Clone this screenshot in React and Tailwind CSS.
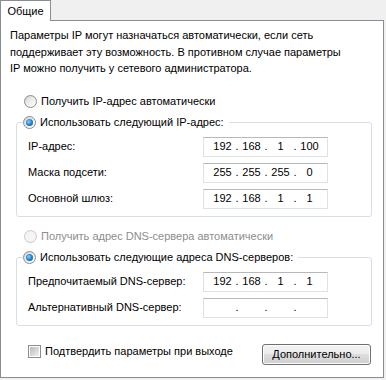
import React from 'react';

const font = { fontFamily: '"Liberation Sans", Arial, sans-serif' };

function Radio({ checked, disabled }) {
  return (
    <span
      className={`relative flex items-center justify-center w-[13px] h-[13px] rounded-full border shrink-0 ${
        disabled
          ? 'border-[#c9c9c9] bg-[#f4f4f4]'
          : 'border-[#8a8c8f] bg-gradient-to-br from-[#cfd1d4] via-[#eeeeee] to-white'
      }`}
    >
      {checked && (
        <span className="w-[7px] h-[7px] rounded-full bg-[radial-gradient(circle_at_40%_40%,#8fd3ff_0%,#2a8ad4_45%,#0d3f78_100%)]" />
      )}
    </span>
  );
}

function Checkbox() {
  return (
    <span className="flex items-center justify-center w-[13px] h-[13px] border border-[#8a8c8f] bg-white shrink-0">
      <span className="w-[9px] h-[9px] bg-gradient-to-br from-[#b4b8bd] to-[#f3f3f3]" />
    </span>
  );
}

function IpField({ parts }) {
  return (
    <div className="flex items-center w-[125px] h-[20px] border border-[#dde2e8] border-t-[#b5b8bd] bg-white pl-[8px] text-[11px] text-black">
      {parts.map((p, i) => (
        <React.Fragment key={i}>
          <span className="w-[21px] text-center">{p}</span>
          {i < 3 && <span className="w-[8px] text-center">.</span>}
        </React.Fragment>
      ))}
    </div>
  );
}

function Row({ label, parts }) {
  return (
    <div className="flex items-center h-[20px]">
      <span className="w-[175px]">{label}</span>
      <IpField parts={parts} />
    </div>
  );
}

function Group({ legend, children }) {
  return (
    <fieldset className="ml-[15px] w-[356px] border border-[#d5dfe5] rounded-[3px] pt-[6px] pb-[7px]">
      <legend className="ml-[6px] pr-[5px] h-[16px] flex items-center gap-[4px]">
        <Radio checked />
        <span>{legend}</span>
      </legend>
      <div className="pl-[11px] flex flex-col gap-[6px]">{children}</div>
    </fieldset>
  );
}

export default function App() {
  return (
    <div className="w-[386px] h-[380px] bg-[#f0f0f0] text-[11px] text-black" style={font}>
      {/* Tab */}
      <div className="relative z-10 w-[51px] h-[21px] -mb-px bg-white border border-b-0 border-[#898c95] flex items-center justify-center">
        Общие
      </div>

      {/* Panel */}
      <div className="w-[384px] h-[358px] bg-white border border-[#898c95]">
        <p className="pl-[9px] pt-[6px] leading-[16.5px]">
          Параметры IP могут назначаться автоматически, если сеть
          <br />
          поддерживает эту возможность. В противном случае параметры
          <br />
          IP можно получить у сетевого администратора.
        </p>

        <div className="ml-[23px] mt-[17px] h-[16px] flex items-center gap-[4px]">
          <Radio />
          <span>Получить IP-адрес автоматически</span>
        </div>

        <div className="mt-[5px]">
          <Group legend="Использовать следующий IP-адрес:">
            <Row label="IP-адрес:" parts={['192', '168', '1', '100']} />
            <Row label="Маска подсети:" parts={['255', '255', '255', '0']} />
            <Row label="Основной шлюз:" parts={['192', '168', '1', '1']} />
          </Group>
        </div>

        <div className="ml-[23px] mt-[12px] h-[16px] flex items-center gap-[4px] text-[#8d8d8d]">
          <Radio disabled />
          <span>Получить адрес DNS-сервера автоматически</span>
        </div>

        <div className="mt-[5px]">
          <Group legend="Использовать следующие адреса DNS-серверов:">
            <Row label="Предпочитаемый DNS-сервер:" parts={['192', '168', '1', '1']} />
            <Row label="Альтернативный DNS-сервер:" parts={['', '', '', '']} />
          </Group>
        </div>

        <div className="mt-[18px] flex items-start">
          <div className="ml-[27px] mt-[1px] flex items-center gap-[4px] w-[234px] h-[14px]">
            <Checkbox />
            <span>Подтвердить параметры при выходе</span>
          </div>
          <button className="w-[109px] h-[21px] rounded-[3px] border border-[#707070] bg-[linear-gradient(#f2f2f2_0%,#ebebeb_50%,#dddddd_50%,#cfcfcf_100%)] shadow-[inset_0_0_0_1px_#fcfcfc] text-[11px] text-black">
            Дополнительно...
          </button>
        </div>
      </div>
    </div>
  );
}
